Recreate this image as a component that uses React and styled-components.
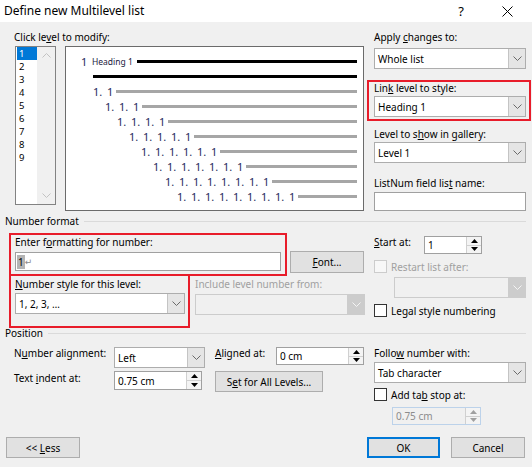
import React from "react";
import styled, { createGlobalStyle } from "styled-components";

const GlobalStyle = createGlobalStyle`
  html, body { margin: 0; padding: 0; background: #fff; }
  body { font-family: "Noto Sans", "DejaVu Sans", sans-serif; }
  *, *::before, *::after { box-sizing: border-box; }
`;

const Window = styled.div`
  position: relative;
  width: 532px;
  height: 471px;
  background: #f0f0f0;
  border-bottom: 4px solid #fff;
  display: flex;
  flex-direction: column;
  font-family: "Noto Sans", "DejaVu Sans", sans-serif;
  font-size: 10px;
  color: #000;
  overflow: hidden;
`;

const TitleBar = styled.div`
  height: 22px;
  flex: none;
  background: #fff;
  display: flex;
  align-items: center;
  padding-left: 4px;
  padding-right: 2px;
`;

const TitleText = styled.div`
  flex: 1;
  font-size: 12px;
  line-height: 16px;
  white-space: nowrap;
`;

const TitleButton = styled.div`
  width: 46px;
  height: 22px;
  display: flex;
  align-items: center;
  justify-content: center;
  font-size: 13px;
`;

const Acc = styled.span`
  text-decoration: underline;
  text-underline-offset: 1px;
`;

const Label = styled.div`
  height: 14px;
  line-height: 14px;
  white-space: nowrap;
  flex: none;
  width: ${(p) => (p.$w ? `${p.$w}px` : "auto")};
  margin-top: ${(p) => p.$mt || 0}px;
  margin-left: ${(p) => p.$ml || 0}px;
  color: ${(p) => (p.$disabled ? "#a0a0a0" : "#000")};
`;

const TopSection = styled.div`
  display: flex;
  padding: 8px 0 0 14px;
  flex: none;
`;

const Column = styled.div`
  display: flex;
  flex-direction: column;
  flex: none;
  width: ${(p) => p.$w}px;
  margin-left: ${(p) => p.$ml || 0}px;
`;

const Row = styled.div`
  display: flex;
  align-items: flex-start;
  flex: none;
  margin-top: ${(p) => p.$mt || 0}px;
  margin-left: ${(p) => p.$ml || 0}px;
`;

const CheckRow = styled.div`
  display: flex;
  align-items: center;
  height: 13px;
  margin-top: ${(p) => p.$mt || 0}px;
`;

const LevelList = styled.div`
  margin-left: 1px;
  width: 41px;
  height: 159px;
  border: 1px solid #828282;
  background: #fff;
  display: flex;
`;

const LevelItems = styled.div`
  width: 21px;
  padding-left: 1px;
  display: flex;
  flex-direction: column;
`;

const LevelItem = styled.div`
  height: 13px;
  line-height: 13px;
  padding-left: 2px;
  font-size: 9.5px;
  overflow: hidden;
  background: ${(p) => (p.$sel ? "#0078d7" : "transparent")};
  color: ${(p) => (p.$sel ? "#fff" : "#000")};
`;

const ScrollTrack = styled.div`
  flex: 1;
  background: #f0f0f0;
  display: flex;
  flex-direction: column;
  justify-content: space-between;
`;

const ScrollBtn = styled.div`
  height: 17px;
  display: flex;
  align-items: center;
  justify-content: center;
`;

const Preview = styled.div`
  margin-left: 9px;
  width: 299px;
  height: 165px;
  border: 1px solid #6b6b6b;
  background: #fff;
  padding: 7px 6px 0 0;
  display: flex;
  flex-direction: column;
`;

const PRow = styled.div`
  height: 15px;
  display: flex;
  align-items: center;
  padding-left: ${(p) => p.$indent}px;
`;

const Num = styled.span`
  flex: none;
  width: ${(p) => p.$w}px;
  font-size: 11px;
  line-height: 15px;
  color: #1f2a5c;
  white-space: nowrap;
`;

const HeadText = styled.span`
  flex: none;
  width: 45px;
  font-size: 8.5px;
  line-height: 15px;
  color: #1b2040;
  white-space: nowrap;
`;

const Bar = styled.div`
  flex: 1;
  height: 3px;
  background: ${(p) => (p.$dark ? "#000" : "#a6a6a6")};
`;

const Select = styled.div`
  display: flex;
  flex: none;
  width: ${(p) => p.$w}px;
  height: 21px;
  margin-top: ${(p) => p.$mt || 0}px;
  margin-left: ${(p) => p.$ml || 0}px;
  border: 1px solid ${(p) => (p.$disabled ? "#cccccc" : "#adadad")};
  background: ${(p) => (p.$disabled ? "#f0f0f0" : "#fff")};
`;

const SelectText = styled.div`
  flex: 1;
  padding-left: 3px;
  display: flex;
  align-items: center;
  white-space: nowrap;
  overflow: hidden;
`;

const SelectArrow = styled.div`
  width: 17px;
  flex: none;
  display: flex;
  align-items: center;
  justify-content: center;
  background: ${(p) => (p.$disabled ? "#cccccc" : "#e5e5e5")};
  border-left: 1px solid ${(p) => (p.$disabled ? "#cccccc" : "#c4c4c4")};
`;

const TextInput = styled.div`
  display: flex;
  align-items: center;
  flex: none;
  width: ${(p) => p.$w}px;
  height: 19px;
  margin-top: ${(p) => p.$mt || 0}px;
  border: 1px solid #a0a0a0;
  background: #fff;
  padding-left: 1px;
  white-space: nowrap;
`;

const Selected = styled.span`
  background: #b4b4b4;
  line-height: 14px;
  padding: 0 1px;
`;

const ParaMark = styled.span`
  color: #8a8a8a;
  font-family: "DejaVu Sans", sans-serif;
  font-size: 9px;
  line-height: 14px;
`;

const Spin = styled.div`
  display: flex;
  flex: none;
  width: ${(p) => p.$w}px;
  height: ${(p) => p.$h || 18}px;
  margin-top: ${(p) => p.$mt || 0}px;
  margin-left: ${(p) => p.$ml || 0}px;
  border: 1px solid ${(p) => (p.$disabled ? "#bcd2ea" : "#a0a0a0")};
  background: ${(p) => (p.$disabled ? "#f0f0f0" : "#fff")};
`;

const SpinText = styled.div`
  flex: 1;
  display: flex;
  align-items: center;
  padding-left: 3px;
  white-space: nowrap;
  color: ${(p) => (p.$disabled ? "#8c8c8c" : "#000")};
`;

const SpinButtons = styled.div`
  width: 15px;
  flex: none;
  display: flex;
  flex-direction: column;
  border-left: 1px solid #d0d0d0;
  background: #f4f4f4;
`;

const SpinBtn = styled.div`
  flex: 1;
  display: flex;
  align-items: center;
  justify-content: center;
  & + & {
    border-top: 1px solid #d0d0d0;
  }
`;

const Box = styled.div`
  width: 13px;
  height: 13px;
  flex: none;
  border: 1px solid ${(p) => (p.$disabled ? "#cccccc" : "#333")};
  background: ${(p) => (p.$disabled ? "#f7f7f7" : "#fff")};
  margin-right: 4px;
`;

const Button = styled.div`
  flex: none;
  width: ${(p) => p.$w}px;
  height: ${(p) => p.$h || 21}px;
  margin-top: ${(p) => p.$mt || 0}px;
  margin-left: ${(p) => p.$ml || 0}px;
  border: ${(p) => (p.$default ? "2px solid #0078d7" : "1px solid #adadad")};
  background: #e1e1e1;
  display: flex;
  align-items: center;
  justify-content: center;
  white-space: nowrap;
`;

const GroupHeader = styled.div`
  display: flex;
  align-items: center;
  height: 14px;
  flex: none;
  padding: 0 6px 0 5px;
  margin-top: ${(p) => p.$mt || 0}px;
`;

const GroupTitle = styled.span`
  line-height: 14px;
  white-space: nowrap;
`;

const GroupRule = styled.div`
  flex: 1;
  height: 1px;
  background: #dadada;
  margin-left: 5px;
`;

const Section = styled.div`
  display: flex;
  flex: none;
  padding-left: ${(p) => p.$pl || 0}px;
`;

const Footer = styled.div`
  display: flex;
  flex: none;
  align-items: center;
  padding: 0 7px 0 6px;
  margin-top: 12px;
`;

const Spacer = styled.div`
  flex: 1;
`;

const Annotation = styled.div`
  position: absolute;
  border: 2px solid #e81c2a;
  pointer-events: none;
  left: ${(p) => p.$x}px;
  top: ${(p) => p.$y}px;
  width: ${(p) => p.$w}px;
  height: ${(p) => p.$h}px;
`;

const Chevron = ({ up, color = "#606060" }) => (
  <svg width="9" height="5" viewBox="0 0 9 5">
    <path
      d={up ? "M0.5 4.5 L4.5 0.5 L8.5 4.5" : "M0.5 0.5 L4.5 4.5 L8.5 0.5"}
      fill="none"
      stroke={color}
      strokeWidth="1"
    />
  </svg>
);

const Tri = ({ up, color = "#000" }) => (
  <svg width="7" height="4" viewBox="0 0 7 4">
    <path d={up ? "M0 4 L3.5 0 L7 4 Z" : "M0 0 L3.5 4 L7 0 Z"} fill={color} />
  </svg>
);

const Dropdown = ({ w, mt, ml, disabled, children }) => (
  <Select $w={w} $mt={mt} $ml={ml} $disabled={disabled}>
    <SelectText>{children}</SelectText>
    <SelectArrow $disabled={disabled}>
      <Chevron color={disabled ? "#f4f4f4" : "#6a6a6a"} />
    </SelectArrow>
  </Select>
);

const SpinBox = ({ w, h, mt, ml, disabled, children }) => (
  <Spin $w={w} $h={h} $mt={mt} $ml={ml} $disabled={disabled}>
    <SpinText $disabled={disabled}>{children}</SpinText>
    <SpinButtons>
      <SpinBtn>
        <Tri up color={disabled ? "#a0a0a0" : "#000"} />
      </SpinBtn>
      <SpinBtn>
        <Tri color={disabled ? "#a0a0a0" : "#000"} />
      </SpinBtn>
    </SpinButtons>
  </Spin>
);

const levels = [2, 3, 4, 5, 6, 7, 8, 9];

export default function App() {
  return (
    <>
      <GlobalStyle />
      <Window>
        <TitleBar>
          <TitleText>Define new Multilevel list</TitleText>
          <TitleButton>?</TitleButton>
          <TitleButton>
            <svg width="11" height="11" viewBox="0 0 11 11">
              <path d="M0.5 0.5 L10.5 10.5 M10.5 0.5 L0.5 10.5" stroke="#000" strokeWidth="1" />
            </svg>
          </TitleButton>
        </TitleBar>

        <TopSection>
          <Column $w={350}>
            <Label>
              Click le<Acc>v</Acc>el to modify:
            </Label>
            <Row $mt={2}>
              <LevelList>
                <LevelItems>
                  {[1, 2, 3, 4, 5, 6, 7, 8, 9].map((n) => (
                    <LevelItem key={n} $sel={n === 1}>
                      {n}
                    </LevelItem>
                  ))}
                </LevelItems>
                <ScrollTrack>
                  <ScrollBtn>
                    <Chevron up color="#c2c2c2" />
                  </ScrollBtn>
                  <ScrollBtn>
                    <Chevron color="#c2c2c2" />
                  </ScrollBtn>
                </ScrollTrack>
              </LevelList>
              <Preview>
                <PRow $indent={15}>
                  <Num $w={11}>1</Num>
                  <HeadText>Heading 1</HeadText>
                  <Bar $dark />
                </PRow>
                <PRow $indent={27}>
                  <Bar $dark />
                </PRow>
                {levels.map((L) => (
                  <PRow key={L} $indent={15 + (L - 1) * 12}>
                    {Array.from({ length: L - 1 }).map((_, i) => (
                      <Num key={i} $w={14}>
                        1.
                      </Num>
                    ))}
                    <Num $w={9}>1</Num>
                    <Bar />
                  </PRow>
                ))}
              </Preview>
            </Row>
          </Column>

          <Column $w={152} $ml={10}>
            <Label>
              Apply <Acc>c</Acc>hanges to:
            </Label>
            <Dropdown w={152} mt={4}>
              Whole list
            </Dropdown>
            <Label $mt={12}>
              Lin<Acc>k</Acc> level to style:
            </Label>
            <Dropdown w={152} mt={1}>
              Heading 1
            </Dropdown>
            <Label $mt={10}>
              Level to s<Acc>h</Acc>ow in gallery:
            </Label>
            <Dropdown w={152} mt={1}>
              Level 1
            </Dropdown>
            <Label $mt={13}>
              ListNum field lis<Acc>t</Acc> name:
            </Label>
            <TextInput $w={152} $mt={2} />
          </Column>
        </TopSection>

        <GroupHeader $mt={3}>
          <GroupTitle>Number format</GroupTitle>
          <GroupRule />
        </GroupHeader>

        <Section $pl={15}>
          <Column $w={350}>
            <Row $mt={7}>
              <Column $w={266}>
                <Label>
                  Enter f<Acc>o</Acc>rmatting for number:
                </Label>
                <TextInput $w={266} $mt={3}>
                  <Selected>1</Selected>
                  <ParaMark>↵</ParaMark>
                </TextInput>
              </Column>
              <Button $w={74} $h={22} $ml={9} $mt={16}>
                <span>
                  <Acc>F</Acc>ont...
                </span>
              </Button>
            </Row>
            <Row $mt={4}>
              <Column $w={170}>
                <Label>
                  <Acc>N</Acc>umber style for this level:
                </Label>
                <Dropdown w={170} mt={2}>
                  1, 2, 3, …
                </Dropdown>
              </Column>
              <Column $w={170} $ml={10}>
                <Label $disabled>Include level number from:</Label>
                <Dropdown w={170} mt={3} disabled />
              </Column>
            </Row>
          </Column>

          <Column $w={152} $ml={9}>
            <Row $mt={7}>
              <Label $w={50}>
                <Acc>S</Acc>tart at:
              </Label>
              <SpinBox w={58} mt={1}>
                1
              </SpinBox>
            </Row>
            <CheckRow $mt={6}>
              <Box $disabled />
              <Label $disabled>Restart list after:</Label>
            </CheckRow>
            <Dropdown w={132} mt={4} ml={20} disabled />
            <CheckRow $mt={6}>
              <Box />
              <Label>Legal style numbering</Label>
            </CheckRow>
          </Column>
        </Section>

        <GroupHeader $mt={9}>
          <GroupTitle>Position</GroupTitle>
          <GroupRule />
        </GroupHeader>

        <Section $pl={14}>
          <Column $w={350}>
            <Row $mt={6}>
              <Label $w={100}>
                N<Acc>u</Acc>mber alignment:
              </Label>
              <Dropdown w={91} mt={1}>
                Left
              </Dropdown>
              <Label $w={61} $ml={10}>
                <Acc>A</Acc>ligned at:
              </Label>
              <SpinBox w={88} mt={1}>
                0 cm
              </SpinBox>
            </Row>
            <Row $mt={3}>
              <Label $w={100}>
                Text <Acc>i</Acc>ndent at:
              </Label>
              <SpinBox w={88} h={19}>
                0.75 cm
              </SpinBox>
              <Button $w={108} $ml={13}>
                <span>
                  S<Acc>e</Acc>t for All Levels...
                </span>
              </Button>
            </Row>
          </Column>
          <Column $w={152} $ml={10}>
            <Label $mt={6}>
              Follo<Acc>w</Acc> number with:
            </Label>
            <Dropdown w={152} mt={2}>
              Tab character
            </Dropdown>
            <CheckRow $mt={5}>
              <Box />
              <Label>
                Add ta<Acc>b</Acc> stop at:
              </Label>
            </CheckRow>
            <SpinBox w={89} mt={6} ml={18} disabled>
              0.75 cm
            </SpinBox>
          </Column>
        </Section>

        <Footer>
          <Button $w={74}>
            <span>
              &lt;&lt; <Acc>L</Acc>ess
            </span>
          </Button>
          <Spacer />
          <Button $w={73} $default>
            OK
          </Button>
          <Button $w={74} $ml={11}>
            Cancel
          </Button>
        </Footer>

        <Annotation $x={367} $y={80} $w={164} $h={41} />
        <Annotation $x={9} $y={233} $w={278} $h={43} />
        <Annotation $x={9} $y={274} $w={181} $h={54} />
      </Window>
    </>
  );
}
